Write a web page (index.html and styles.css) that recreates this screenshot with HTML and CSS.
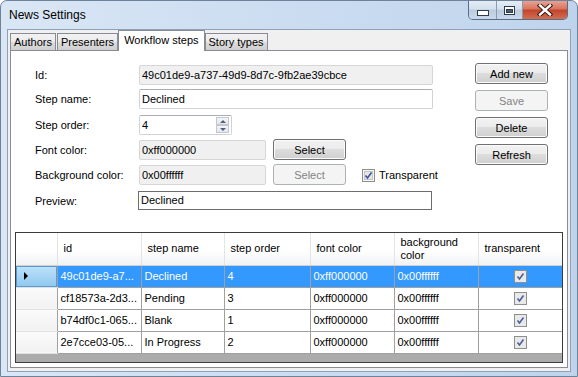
FILE: index.html
```html
<!DOCTYPE html>
<html lang="en">
<head>
  <meta charset="UTF-8">
  <title>News Settings</title>
  <link rel="stylesheet" href="styles.css">
</head>
<body>

<div class="window">
  <div class="titlebar">
    <span class="title">News Settings</span>
    <div class="caption">
      <div class="cap min">
        <svg width="12" height="6" viewBox="0 0 12 6"><rect x="0.5" y="0.5" width="11" height="5" fill="#fff" stroke="#2f3b4b"/></svg>
      </div>
      <div class="cap max">
        <svg width="11" height="9" viewBox="0 0 11 9"><rect x="0.5" y="0.5" width="10" height="8" fill="#fff" stroke="#2f3b4b"/><rect x="2.5" y="3.5" width="6" height="3" fill="#4d5c70" stroke="#2f3b4b"/></svg>
      </div>
      <div class="cap close">
        <svg width="16" height="12" viewBox="0 0 16 12"><path d="M3 1.5 L13 10.5 M13 1.5 L3 10.5" stroke="#3a1a14" stroke-width="4.4" stroke-linecap="square"/><path d="M3 1.5 L13 10.5 M13 1.5 L3 10.5" stroke="#fff" stroke-width="2.4" stroke-linecap="square"/></svg>
      </div>
    </div>
  </div>

  <div class="client">
    <div class="tabs">
      <div class="tab">Authors</div>
      <div class="tab">Presenters</div>
      <div class="tab active">Workflow steps</div>
      <div class="tab">Story types</div>
    </div>

    <div class="panel">
      <div class="editor">
        <div class="form">
          <label>Id:</label>
          <div class="row"><input class="field readonly wide" value="49c01de9-a737-49d9-8d7c-9fb2ae39cbce" readonly></div>

          <label>Step name:</label>
          <div class="row"><input class="field wide" value="Declined"></div>

          <label>Step order:</label>
          <div class="row">
            <div class="spin">
              <input class="spin-value" value="4">
              <div class="spin-buttons">
                <div class="spin-btn"><span class="arrow up"></span></div>
                <div class="spin-btn"><span class="arrow down"></span></div>
              </div>
            </div>
          </div>

          <label>Font color:</label>
          <div class="row">
            <input class="field readonly short" value="0xff000000" readonly>
            <button class="btn select">Select</button>
          </div>

          <label>Background color:</label>
          <div class="row">
            <input class="field readonly short" value="0x00ffffff" readonly>
            <button class="btn select" disabled>Select</button>
            <span class="checkbox">
              <svg width="13" height="13" viewBox="0 0 13 13"><rect x="0.5" y="0.5" width="12" height="12" fill="#f4f4f4" stroke="#8e8f8f"/><rect x="2.5" y="2.5" width="8" height="8" fill="#e6e6e6" stroke="#c4c4c4"/><path d="M3.5 6.5 L5.5 9 L9.5 3.5" fill="none" stroke="#3b55a0" stroke-width="1.6"/></svg>
              Transparent
            </span>
          </div>

          <label>Preview:</label>
          <div class="row"><div class="field preview wide">Declined</div></div>
        </div>

        <div class="actions">
          <button class="btn">Add new</button>
          <button class="btn" disabled>Save</button>
          <button class="btn">Delete</button>
          <button class="btn">Refresh</button>
        </div>
      </div>

      <div class="grid">
        <table>
          <colgroup>
            <col style="width:41px"><col style="width:84px"><col style="width:83px"><col style="width:86px">
            <col style="width:84px"><col style="width:84px"><col style="width:84px">
          </colgroup>
          <thead>
            <tr>
              <th class="corner"></th>
              <th>id</th>
              <th>step name</th>
              <th>step order</th>
              <th>font color</th>
              <th>background color</th>
              <th>transparent</th>
            </tr>
          </thead>
          <tbody>
            <tr class="selected">
              <td class="rowhead"><span class="pointer"></span></td>
              <td>49c01de9-a7...</td>
              <td>Declined</td>
              <td>4</td>
              <td>0xff000000</td>
              <td>0x00ffffff</td>
              <td class="center"><span class="cell-check"></span></td>
            </tr>
            <tr>
              <td class="rowhead"></td>
              <td>cf18573a-2d3...</td>
              <td>Pending</td>
              <td>3</td>
              <td>0xff000000</td>
              <td>0x00ffffff</td>
              <td class="center"><span class="cell-check"></span></td>
            </tr>
            <tr>
              <td class="rowhead"></td>
              <td>b74df0c1-065...</td>
              <td>Blank</td>
              <td>1</td>
              <td>0xff000000</td>
              <td>0x00ffffff</td>
              <td class="center"><span class="cell-check"></span></td>
            </tr>
            <tr>
              <td class="rowhead"></td>
              <td>2e7cce03-05...</td>
              <td>In Progress</td>
              <td>2</td>
              <td>0xff000000</td>
              <td>0x00ffffff</td>
              <td class="center"><span class="cell-check"></span></td>
            </tr>
          </tbody>
        </table>
      </div>
    </div>
  </div>
</div>

</body>
</html>
```

FILE: styles.css
```css
* {
  box-sizing: border-box;
}

body {
  margin: 0;
  background: #fff;
  font-family: "Liberation Sans", Arial, sans-serif;
  font-size: 11px;
  color: #000;
}

/* window frame */
.window {
  width: 578px;
  height: 377px;
  display: flex;
  flex-direction: column;
  border: 1px solid #6e829a;
  border-radius: 7px 7px 0 0;
  background: linear-gradient(to right, #d9e6f5, #c9dbf0 60%, #bfd4ec);
  padding: 0 6px 4px 6px;
}

.titlebar {
  height: 28px;
  display: flex;
  justify-content: space-between;
  align-items: flex-start;
}

.title {
  font-size: 12px;
  line-height: 28px;
  margin-left: 2px;
}

.caption {
  display: flex;
  margin-right: 3px;
  height: 19px;
  border: 1px solid #5b6d84;
  border-top: none;
  border-radius: 0 0 5px 5px;
  overflow: hidden;
}

.cap {
  display: flex;
  align-items: center;
  justify-content: center;
  background: linear-gradient(#e4ecf6, #d4e0ee 45%, #bccbde 50%, #c9d8ea);
  border-right: 1px solid #8a9bb1;
}

.cap.min { width: 28px; padding-top: 5px; }
.cap.max { width: 26px; }
.cap.close {
  width: 44px;
  border-right: none;
  background: linear-gradient(#e8a393, #d7735c 45%, #c3432b 50%, #d06f52);
}

/* client area */
.client {
  flex: 1;
  display: flex;
  flex-direction: column;
  background: #f0f0f0;
  border: 1px solid #8fa1b8;
  padding: 0 2px 3px 2px;
}

.tabs {
  height: 20px;
  display: flex;
  align-items: flex-end;
}

.tab {
  height: 17px;
  line-height: 16px;
  padding: 0 3px;
  border: 1px solid #898c95;
  border-bottom: none;
  background: linear-gradient(#f2f2f2, #ebebeb 50%, #dddddd 50%, #cfcfcf);
  margin-right: 1px;
}

.tab.active {
  height: 21px;
  line-height: 18px;
  padding: 0 5px;
  margin: 0 0 -1px -1px;
  background: #fff;
  position: relative;
  z-index: 1;
}

.panel {
  flex: 1;
  display: flex;
  flex-direction: column;
  background: #fff;
  border: 1px solid #898c95;
  padding: 14px 4px 4px 4px;
}

/* edit form */
.editor {
  display: flex;
}

.form {
  margin-left: 20px;
  display: grid;
  grid-template-columns: 104px 294px;
  grid-template-rows: 24px 26px 25px 25px 26px 19px;
}

.form label {
  line-height: 20px;
}

.row {
  display: flex;
  align-items: flex-start;
  white-space: nowrap;
}

.field {
  height: 20px;
  border: 1px solid #cfd3d8;
  border-top-color: #abadb3;
  border-radius: 2px;
  padding: 0 2px;
  font: inherit;
  color: #000;
  background: #fff;
  outline: none;
}

.field.readonly {
  background: #f0f0f0;
  border-color: #d6d6d6;
}

.field.preview {
  height: 19px;
  line-height: 17px;
  border: 1px solid #6d6d6d;
  border-radius: 0;
  margin-left: -1px;
}

.wide { width: 294px; }
.short { width: 127px; flex-shrink: 0; }

.spin {
  width: 93px;
  height: 20px;
  display: flex;
  border: 1px solid #cfd3d8;
  border-top-color: #abadb3;
  border-radius: 2px;
}

.spin-value {
  flex: 1;
  width: 0;
  border: none;
  font: inherit;
  padding: 0 2px;
  outline: none;
}

.spin-buttons {
  width: 16px;
  display: flex;
  flex-direction: column;
  padding: 1px 2px 1px 1px;
}

.spin-btn {
  flex: 1;
  display: flex;
  align-items: center;
  justify-content: center;
  border: 1px solid #c4c8ce;
  background: linear-gradient(#f4f5f7, #e3e6ea);
}

.arrow {
  width: 0;
  height: 0;
  border-left: 3px solid transparent;
  border-right: 3px solid transparent;
}
.arrow.up { border-bottom: 3px solid #4d6185; }
.arrow.down { border-top: 3px solid #4d6185; }

.btn {
  width: 73px;
  height: 21px;
  padding: 0;
  font: inherit;
  color: #000;
  border: 1px solid #707070;
  border-radius: 3px;
  background: linear-gradient(#f2f2f2, #ebebeb 49%, #dddddd 50%, #cfcfcf);
  box-shadow: inset 0 0 0 1px #fbfbfb;
  flex-shrink: 0;
}

.btn:disabled {
  color: #838383;
  border-color: #adb2b5;
  background: #f4f4f4;
  box-shadow: none;
}

.btn.select {
  margin: -1px 0 0 7px;
}

.checkbox {
  display: flex;
  align-items: center;
  gap: 4px;
  margin: 4px 0 0 16px;
  line-height: 13px;
}

.actions {
  margin: -2px 0 0 42px;
  display: flex;
  flex-direction: column;
  gap: 6px;
}

/* data grid */
.grid {
  flex: 1;
  margin-top: 22px;
  border: 1px solid #3c3c3c;
  background: #ababab;
  overflow: hidden;
}

.grid table {
  width: 546px;
  border-collapse: collapse;
  table-layout: fixed;
}

.grid th {
  height: 32px;
  padding: 0 6px;
  font-weight: normal;
  text-align: left;
  line-height: 13px;
  background: linear-gradient(#fff, #fff 55%, #f1f2f4);
  border-right: 1px solid #e3e4e6;
  border-bottom: 1px solid #d0d0d0;
}

.grid td {
  height: 22px;
  padding: 0 3px;
  white-space: nowrap;
  overflow: hidden;
  background: #fff;
  border-right: 1px solid #a0a0a0;
  border-bottom: 1px solid #a0a0a0;
}

.grid td.rowhead {
  background: linear-gradient(#fbfbfb, #f1f1f1);
  border-bottom-color: #e0e0e0;
  border-right-color: #a0a0a0;
}

.grid tr.selected td {
  background: #3399ff;
  color: #fff;
}

.grid tr.selected td.rowhead {
  background: linear-gradient(#bfe2f9, #8fc8f0);
  box-shadow: inset 0 0 0 1px #5a9bd5;
}

.pointer {
  display: block;
  margin-left: 5px;
  width: 0;
  height: 0;
  border-top: 4px solid transparent;
  border-bottom: 4px solid transparent;
  border-left: 4px solid #000;
}

.grid td.center {
  text-align: center;
}

.cell-check {
  display: inline-block;
  vertical-align: middle;
  width: 13px;
  height: 13px;
  border: 1px solid #8f8f8f;
  background: #e9e9e9 url("data:image/svg+xml,%3Csvg xmlns='http://www.w3.org/2000/svg' width='11' height='11'%3E%3Cpath d='M2.5 5.5 L4.5 8 L8.5 2.5' fill='none' stroke='%234a5f97' stroke-width='1.6'/%3E%3C/svg%3E") center no-repeat;
}
```
